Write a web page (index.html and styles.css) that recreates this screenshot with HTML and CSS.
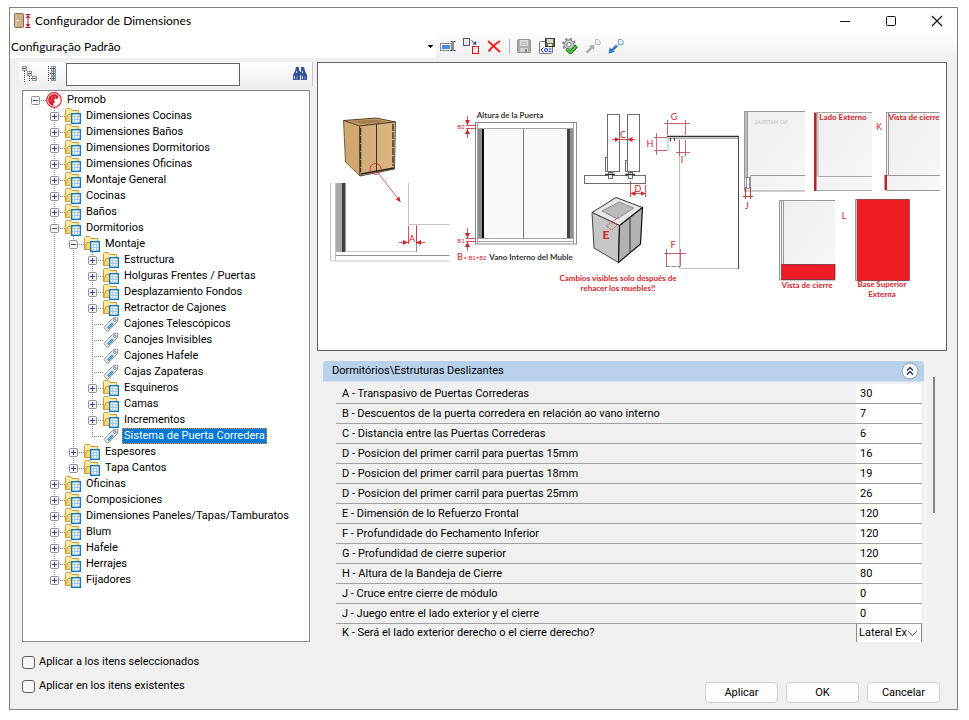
FILE: index.html
```html
<!DOCTYPE html>
<html lang="es">
	<head>
		<meta charset="UTF-8">
		<title>Configurador de Dimensiones</title>
		<link rel="stylesheet" href="styles.css">
	</head>
	<body>
		<!-- shared icons -->
		<svg class="sprite" width="0" height="0" aria-hidden="true">
			<symbol id="plus" viewBox="0 0 9 9">
				<rect x=".5" y=".5" width="8" height="8" rx="1" fill="#f6f6f6" stroke="#8f8f8f"/>
				<path d="M2 4.500h5M4.500 2v5" stroke="#2c4b9c"/>
			</symbol>
			<symbol id="minus" viewBox="0 0 9 9">
				<rect x=".5" y=".5" width="8" height="8" rx="1" fill="#f6f6f6" stroke="#8f8f8f"/>
				<path d="M2 4.500h5" stroke="#2c4b9c"/>
			</symbol>
			<symbol id="folder" viewBox="0 0 16 16">
				<path d="M.5 13.500V1.500L1.500 .5H5.500L7 2.500H13.500V6" fill="#ffe9a8" stroke="#d69a35"/>
				<path d="M.5 13.500L3 6.500H15L13 13.500Z" fill="#fbd371" stroke="#d69a35"/>
				<rect x="6.700" y="5.700" width="8.600" height="9.600" fill="#fff" stroke="#0b79b8" stroke-width="1.400"/>
				<path d="M8 8.500h6M8 11.500h6M9.500 7.500v7M12.500 7.500v7" stroke="#a5c4e6"/>
			</symbol>
			<symbol id="tag" viewBox="0 0 16 16">
				<path d="M1 11.500L9.500 2.500L13.500 1L15 2L14 6L5.500 14.800L4 15Z" fill="#fafafa" stroke="#8a8a8a"/>
				<path d="M4 11.500L9 6.200L10.800 8L5.700 13.200Z" fill="#1c86c6"/>
				<path d="M5 12.200L9.800 7.200" stroke="#8ccdf0" stroke-width=".8"/>
				<circle cx="11.800" cy="4.200" r="1.300" fill="#fff" stroke="#777"/>
			</symbol>
			<symbol id="promob" viewBox="0 0 16 16">
				<circle cx="8" cy="8" r="7.300" fill="#fff" stroke="#d9202c" stroke-width="1.200"/>
				<path d="M7.500 14C3 13 1.500 9.500 2.500 6C3.500 3 6 2 9 2L12 3.500L12.500 6L10.500 7L9 6.500L8 8L9 10.500L7.500 11Z" fill="#d9202c"/>
				<path d="M5 6L7 5M8 4L10 5M4 9L6 8" stroke="#f39aa0" stroke-width=".7"/>
			</symbol>
		</svg>

		<div class="window">
			<header class="titlebar">
				<svg class="app-icon" viewBox="0 0 17 16">
					<rect x=".5" y=".5" width="9" height="14" rx="1" fill="#cdb08a" stroke="#8b6a43"/>
					<path d="M2 2v11" stroke="#e9d6b8"/>
					<path d="M3 7.500h1.500" stroke="#fff"/>
					<path d="M11.500 1.500h5M11.500 14.500h5M14 2v12" stroke="#cf1b2b"/>
					<path d="M11.800 5L14 2L16.200 5ZM11.800 11L14 14L16.200 11Z" fill="#cf1b2b"/>
				</svg>
				<h1>Configurador de Dimensiones</h1>
				<div class="controls">
					<button type="button" aria-label="Minimizar"><svg viewBox="0 0 12 12"><path d="M1 6.500h10" stroke="#111"/></svg></button>
					<button type="button" aria-label="Maximizar"><svg viewBox="0 0 12 12"><rect x="1.500" y="1.500" width="9" height="9" rx="1" fill="none" stroke="#111"/></svg></button>
					<button type="button" aria-label="Cerrar"><svg viewBox="0 0 12 12"><path d="M1 1l10 10M11 1L1 11" stroke="#111" stroke-width="1.200"/></svg></button>
				</div>
			</header>

			<div class="toolbar">
				<select class="profile" aria-label="Perfil">
					<option>Configuração Padrão</option>
				</select>
				<button type="button" aria-label="Renombrar"><svg viewBox="0 0 16 16">
					<rect x=".5" y="5.500" width="11" height="7" fill="#fff" stroke="#7b8794"/>
					<rect x="2" y="7" width="8" height="4" fill="#4f86e0"/>
					<path d="M10.500 3.500h2M13.500 3.500h2M10.500 12.500h2M13.500 12.500h2M13 4v8" stroke="#222"/>
				</svg></button>
				<button type="button" aria-label="Duplicar"><svg viewBox="0 0 16 16">
					<rect x=".5" y=".5" width="6" height="7" fill="#e9e9ee" stroke="#6d5058"/>
					<rect x="9.500" y="8.500" width="6" height="7" fill="#fde9e9" stroke="#d31616"/>
					<path d="M8.500 2.500l3 2.500" stroke="#1a2c78"/><path d="M13 3v3.500h-3.500z" fill="#1a2c78"/>
				</svg></button>
				<button type="button" aria-label="Eliminar"><svg viewBox="0 0 16 16">
					<path d="M2 3L14 14M14 3Q7 7 2.500 13.500" fill="none" stroke="#f32222" stroke-width="2"/>
				</svg></button>
				<span class="sep"></span>
				<button type="button" aria-label="Guardar"><svg viewBox="0 0 16 16">
					<rect x="1.500" y="1.500" width="13" height="13" rx="1" fill="#ababab" stroke="#8e8e8e"/>
					<rect x="4" y="2" width="8" height="6" fill="#dcdcdc"/>
					<path d="M5 4.500h6M5 6.500h6" stroke="#b5b5b5"/>
					<rect x="4" y="10" width="8" height="4" fill="#d4d4d4"/><rect x="9" y="11" width="2" height="3" fill="#888"/>
				</svg></button>
				<button type="button" aria-label="Guardar como"><svg viewBox="0 0 16 16">
					<rect x=".5" y="3.500" width="13" height="12" rx="1" fill="#f7f7f7" stroke="#777"/>
					<rect x="6.500" y=".5" width="9" height="8" fill="#6e6a50" stroke="#3e3c30"/>
					<rect x="8" y="1" width="6" height="4" fill="#dadada"/><rect x="9" y="6" width="4" height="2" fill="#eee"/>
					<path d="M4.500 9.500L2 12L4.500 14.500M9.500 11h3M9.500 13.500h3" fill="none" stroke="#1b35ff"/>
					<circle cx="7" cy="12" r="1.500" fill="none" stroke="#1b35ff"/>
				</svg></button>
				<button type="button" aria-label="Aplicar cambios"><svg viewBox="0 0 16 16">
					<circle cx="7" cy="6.500" r="4.800" fill="#c4c4c4" stroke="#8a8a8a"/>
					<circle cx="7" cy="6.500" r="6" fill="none" stroke="#8a8a8a" stroke-width="1.800" stroke-dasharray="2.400 2.300"/>
					<circle cx="7" cy="6.500" r="2" fill="#f5f5f5" stroke="#8a8a8a"/>
					<path d="M4.500 11L8.500 14.500L14.800 8" fill="none" stroke="#1d7a1d" stroke-width="3.400"/>
					<path d="M4.800 11.200L8.500 14.200L14.500 8.200" fill="none" stroke="#58d047" stroke-width="1.600"/>
				</svg></button>
				<button type="button" aria-label="Exportar"><svg viewBox="0 0 16 16">
					<path d="M.5 13.500L5.500 9L4 7.500L9.500 7L9 12L7.500 10.500L2.500 15.500Z" fill="#aeaeae"/>
					<path d="M10.500 1.500h3l1.500 1.500v3.500h-4.500z" fill="#efefef" stroke="#bfbfbf"/>
				</svg></button>
				<button type="button" aria-label="Importar"><svg viewBox="0 0 16 16">
					<path d="M8 6.500L10 8.500L5.500 12.500L7 14L.5 15.500L1.500 9.500L3.500 11Z" fill="#3b7bcb"/>
					<path d="M10.500 1.500h3l1.500 1.500v3.500h-4.500z" fill="#eef5ff" stroke="#6fa5e6"/>
				</svg></button>
			</div>

			<main class="main">
				<section class="side">
					<div class="search">
						<button type="button" aria-label="Contraer todo"><svg viewBox="0 0 16 16">
							<path d="M2.500 5v11M5 6.500h2M7.500 10v6M9 12.500h2" fill="none" stroke="#444" stroke-dasharray="1 1"/>
							<rect x=".5" y=".5" width="4" height="4" fill="#fff" stroke="#8297a8"/><rect x="5.500" y="5.500" width="4" height="4" fill="#fff" stroke="#8297a8"/><rect x="10.500" y="10.500" width="4" height="4" fill="#fff" stroke="#8297a8"/>
							<path d="M1 2.500h3M6 7.500h3M11 12.500h3" stroke="#555"/>
						</svg></button>
						<button type="button" aria-label="Expandir todo"><svg viewBox="0 0 16 16">
							<path d="M4.500 0v16M6 2.500h2M6 7.500h2M6 12.500h2" stroke="#444" stroke-dasharray="1 1"/>
							<rect x="7.500" y=".5" width="4" height="4" fill="#fff" stroke="#8297a8"/><rect x="7.500" y="5.500" width="4" height="4" fill="#fff" stroke="#8297a8"/><rect x="7.500" y="10.500" width="4" height="4" fill="#fff" stroke="#8297a8"/>
							<path d="M8 2.500h3M8 7.500h3M8 12.500h3M9.500 1v3M9.500 6v3M9.500 11v3" stroke="#555"/>
						</svg></button>
						<input type="text" aria-label="Buscar">
						<button type="button" class="find" aria-label="Buscar siguiente"><svg viewBox="0 0 16 16">
							<path d="M4 1h3v3l1 1v9H1V9l2-4zM9 1h3l1 4 2 4v5H9V5z" fill="#34539a"/>
							<path d="M7 6h2v3H7z" fill="#34539a"/>
							<path d="M2.500 10v3M10.500 10v3M4.500 5v2M10.500 5v2" stroke="#cddbf5"/>
							<path d="M5 10.500v3M13 10.500v3" stroke="#7f9bd4"/>
						</svg></button>
					</div>

					<nav class="tree">
						<ul>
							<li>
								<div class="row"><button type="button" aria-label="Contraer"><svg><use href="#minus"/></svg></button><svg class="icon"><use href="#promob"/></svg><span>Promob</span></div>
								<ul>
									<li><div class="row"><button type="button" aria-label="Expandir"><svg><use href="#plus"/></svg></button><svg class="icon"><use href="#folder"/></svg><span>Dimensiones Cocinas</span></div></li>
									<li><div class="row"><button type="button" aria-label="Expandir"><svg><use href="#plus"/></svg></button><svg class="icon"><use href="#folder"/></svg><span>Dimensiones Baños</span></div></li>
									<li><div class="row"><button type="button" aria-label="Expandir"><svg><use href="#plus"/></svg></button><svg class="icon"><use href="#folder"/></svg><span>Dimensiones Dormitorios</span></div></li>
									<li><div class="row"><button type="button" aria-label="Expandir"><svg><use href="#plus"/></svg></button><svg class="icon"><use href="#folder"/></svg><span>Dimensiones Oficinas</span></div></li>
									<li><div class="row"><button type="button" aria-label="Expandir"><svg><use href="#plus"/></svg></button><svg class="icon"><use href="#folder"/></svg><span>Montaje General</span></div></li>
									<li><div class="row"><button type="button" aria-label="Expandir"><svg><use href="#plus"/></svg></button><svg class="icon"><use href="#folder"/></svg><span>Cocinas</span></div></li>
									<li><div class="row"><button type="button" aria-label="Expandir"><svg><use href="#plus"/></svg></button><svg class="icon"><use href="#folder"/></svg><span>Baños</span></div></li>
									<li>
										<div class="row"><button type="button" aria-label="Contraer"><svg><use href="#minus"/></svg></button><svg class="icon"><use href="#folder"/></svg><span>Dormitorios</span></div>
										<ul>
											<li>
												<div class="row"><button type="button" aria-label="Contraer"><svg><use href="#minus"/></svg></button><svg class="icon"><use href="#folder"/></svg><span>Montaje</span></div>
												<ul>
													<li><div class="row"><button type="button" aria-label="Expandir"><svg><use href="#plus"/></svg></button><svg class="icon"><use href="#folder"/></svg><span>Estructura</span></div></li>
													<li><div class="row"><button type="button" aria-label="Expandir"><svg><use href="#plus"/></svg></button><svg class="icon"><use href="#folder"/></svg><span>Holguras Frentes / Puertas</span></div></li>
													<li><div class="row"><button type="button" aria-label="Expandir"><svg><use href="#plus"/></svg></button><svg class="icon"><use href="#folder"/></svg><span>Desplazamiento Fondos</span></div></li>
													<li><div class="row"><button type="button" aria-label="Expandir"><svg><use href="#plus"/></svg></button><svg class="icon"><use href="#folder"/></svg><span>Retractor de Cajones</span></div></li>
													<li><div class="row leaf"><svg class="icon"><use href="#tag"/></svg><span>Cajones Telescópicos</span></div></li>
													<li><div class="row leaf"><svg class="icon"><use href="#tag"/></svg><span>Canojes Invisibles</span></div></li>
													<li><div class="row leaf"><svg class="icon"><use href="#tag"/></svg><span>Cajones Hafele</span></div></li>
													<li><div class="row leaf"><svg class="icon"><use href="#tag"/></svg><span>Cajas Zapateras</span></div></li>
													<li><div class="row"><button type="button" aria-label="Expandir"><svg><use href="#plus"/></svg></button><svg class="icon"><use href="#folder"/></svg><span>Esquineros</span></div></li>
													<li><div class="row"><button type="button" aria-label="Expandir"><svg><use href="#plus"/></svg></button><svg class="icon"><use href="#folder"/></svg><span>Camas</span></div></li>
													<li><div class="row"><button type="button" aria-label="Expandir"><svg><use href="#plus"/></svg></button><svg class="icon"><use href="#folder"/></svg><span>Incrementos</span></div></li>
													<li><div class="row leaf"><svg class="icon"><use href="#tag"/></svg><span class="selected">Sistema de Puerta Corredera</span></div></li>
												</ul>
											</li>
											<li><div class="row"><button type="button" aria-label="Expandir"><svg><use href="#plus"/></svg></button><svg class="icon"><use href="#folder"/></svg><span>Espesores</span></div></li>
											<li><div class="row"><button type="button" aria-label="Expandir"><svg><use href="#plus"/></svg></button><svg class="icon"><use href="#folder"/></svg><span>Tapa Cantos</span></div></li>
										</ul>
									</li>
									<li><div class="row"><button type="button" aria-label="Expandir"><svg><use href="#plus"/></svg></button><svg class="icon"><use href="#folder"/></svg><span>Oficinas</span></div></li>
									<li><div class="row"><button type="button" aria-label="Expandir"><svg><use href="#plus"/></svg></button><svg class="icon"><use href="#folder"/></svg><span>Composiciones</span></div></li>
									<li><div class="row"><button type="button" aria-label="Expandir"><svg><use href="#plus"/></svg></button><svg class="icon"><use href="#folder"/></svg><span>Dimensiones Paneles/Tapas/Tamburatos</span></div></li>
									<li><div class="row"><button type="button" aria-label="Expandir"><svg><use href="#plus"/></svg></button><svg class="icon"><use href="#folder"/></svg><span>Blum</span></div></li>
									<li><div class="row"><button type="button" aria-label="Expandir"><svg><use href="#plus"/></svg></button><svg class="icon"><use href="#folder"/></svg><span>Hafele</span></div></li>
									<li><div class="row"><button type="button" aria-label="Expandir"><svg><use href="#plus"/></svg></button><svg class="icon"><use href="#folder"/></svg><span>Herrajes</span></div></li>
									<li><div class="row"><button type="button" aria-label="Expandir"><svg><use href="#plus"/></svg></button><svg class="icon"><use href="#folder"/></svg><span>Fijadores</span></div></li>
								</ul>
							</li>
						</ul>
					</nav>
				</section>

				<section class="detail">
					<div class="preview">
						<svg viewBox="318 63 628 287" role="img" aria-label="Estruturas Deslizantes">
							<defs>
								<linearGradient id="wood" x1="0" x2="1"><stop offset="0" stop-color="#d0ab75"/><stop offset="1" stop-color="#dcb880"/></linearGradient>
								<linearGradient id="panel" x1="0" y1="0" x2="1" y2="1"><stop offset="0" stop-color="#eeeeee"/><stop offset="1" stop-color="#f7f7f7"/></linearGradient>
								<marker id="arrow" viewBox="0 0 6 6" refX="6" refY="3" markerWidth="5" markerHeight="5" markerUnits="userSpaceOnUse" orient="auto-start-reverse"><path d="M0 0L6 3L0 6Z" fill="#d2232a"/></marker>
							</defs>

							<!-- cabinet and detail A -->
							<path d="M343.500 120.500L376 118L395.500 122L359.500 126Z" fill="#c9a069" stroke="#57432b"/>
							<path d="M350 121L375 119.500L387 122L362 124Z" fill="#a37e4e"/>
							<path d="M343.500 120.500L359.500 126L360 176L345.500 162Z" fill="#cfa76f" stroke="#57432b" stroke-width=".8"/>
							<path d="M359.500 126L395.500 122L394.500 169L360 176Z" fill="url(#wood)" stroke="#3b3129" stroke-width=".8"/>
							<path d="M376.500 124v48" stroke="#3b2f22"/>
							<path d="M360.500 128v44M393 124v42" stroke="#333" stroke-width="1.400" stroke-dasharray="7 1"/>
							<path d="M361 174L394 168" stroke="#222" stroke-width="1.400"/>
							<circle cx="375.500" cy="169" r="5.500" fill="none" stroke="#d2232a" stroke-width=".8"/>
							<path d="M379 174L400.500 202" stroke="#d2232a" stroke-width=".7" marker-end="url(#arrow)"/>
							<rect x="335.500" y="183" width="7" height="69" fill="#aaa"/>
							<rect x="342" y="183" width="3.500" height="69" fill="#3e3e3e"/>
							<path d="M330.500 183v78M335.500 183v78M345 251.500h72M330.500 261h119M408.500 183v41.500h41" fill="none" stroke="#c4c4c4"/>
							<path d="M335.500 255.500h114M416.500 225v27" stroke="#8f8f8f"/>
							<path d="M408.500 226v18M416.500 226v18" stroke="#d2232a" stroke-width=".8"/>
							<path d="M399 242.500h9" stroke="#d2232a" stroke-width=".8" marker-end="url(#arrow)"/>
							<path d="M425 242.500h-9" stroke="#d2232a" stroke-width=".8" marker-end="url(#arrow)"/>
							<text class="dim" x="412" y="242">A</text>

							<!-- front view -->
							<rect x="475.500" y="122.500" width="101" height="121.500" fill="#fff" stroke="#8c8c8c"/>
							<path d="M477.500 123v121M573.500 123v121M478 128.500h95M478 238.500h95M478 241.500h95" stroke="#8c8c8c" stroke-width=".8"/>
							<rect x="484" y="129" width="83" height="109" fill="#faf8f8"/>
							<rect x="478" y="129" width="4" height="109" fill="#8b8b8b"/>
							<rect x="482" y="129" width="2" height="109" fill="#0d0d0d"/>
							<rect x="567" y="129" width="3" height="109" fill="#444"/>
							<rect x="570" y="129" width="3" height="109" fill="#909090"/>
							<path d="M523.500 129v109" stroke="#777"/>
							<g stroke="#d2232a" stroke-width=".8">
								<path d="M466 125.500h10M466 128.500h10M466 238.500h10M466 241.500h10"/>
								<path d="M467.500 116v9" marker-end="url(#arrow)"/>
								<path d="M467.500 138v-9" marker-end="url(#arrow)"/>
								<path d="M467.500 228v10" marker-end="url(#arrow)"/>
								<path d="M467.500 251v-9" marker-end="url(#arrow)"/>
							</g>
							<text class="tiny" x="461" y="129">B2</text>
							<text class="tiny" x="461" y="243">B1</text>
							<text class="dim" x="460" y="260">B</text>
							<text class="tiny" x="475" y="260">= B1+B2</text>
							<text class="note dark" x="510" y="118">Altura de la Puerta</text>
							<text class="note dark" x="531" y="260">Vano Interno del Muble</text>

							<!-- door gap and first rail -->
							<g fill="#fff" stroke="#6b6b6b">
								<rect x="607.500" y="114.500" width="12" height="57"/>
								<rect x="627.500" y="114.500" width="12" height="57"/>
								<rect x="584.500" y="175.500" width="61" height="8"/>
								<rect x="605.500" y="157.500" width="2" height="14"/>
								<rect x="625.500" y="160.500" width="2" height="11"/>
								<rect x="608.500" y="172.500" width="4" height="6"/>
								<rect x="628.500" y="172.500" width="4" height="6"/>
							</g>
							<path d="M605 174.500h10M625 174.500h10" stroke="#333" stroke-width="1.400"/>
							<g stroke="#d2232a" stroke-width=".8">
								<path d="M612 139.500h7.500" marker-end="url(#arrow)"/>
								<path d="M635 139.500h-7.500" marker-end="url(#arrow)"/>
								<path d="M619.500 139.500h8M630.500 181v16M645.500 185v12"/>
								<path d="M630.500 193.500h15" marker-start="url(#arrow)" marker-end="url(#arrow)"/>
							</g>
							<text class="dim" x="623" y="138">C</text>
							<text class="dim" x="638" y="192">D</text>

							<!-- open box -->
							<path d="M592 212.500L616 197.500L642.500 207.500L619.500 225.500Z" fill="#e8e8e8" stroke="#333"/>
							<path d="M602 211L619 202L634 208L617 219Z" fill="#b9b9b9" stroke="#666" stroke-width=".6"/>
							<path d="M592 212.500L619.500 225.500L618.500 262.500L594 248Z" fill="#c6c6c6" stroke="#444"/>
							<path d="M619.500 225.500L642.500 207.500L640.500 244L618.500 262.500Z" fill="#b2b2b2" stroke="#111" stroke-width="1.200"/>
							<path d="M630 218v34.500" stroke="#333"/>
							<path d="M606 226L612 222L617 225L612 230ZM612 222L619 217" fill="none" stroke="#d2232a" stroke-width=".7" stroke-dasharray="2 1"/>
							<text class="big" x="606" y="239">E</text>
							<text class="note" x="618" y="281">Cambios visibles solo después de</text>
							<text class="note" x="618" y="291">rehacer los muebles!!</text>

							<!-- closing profile G H I F -->
							<path d="M667 136.500h72" stroke="#333" stroke-width="1.600"/>
							<path d="M667 138.500h71" stroke="#aaa"/>
							<path d="M738.500 137v132" stroke="#4a4a4a"/>
							<path d="M679.500 138v131M668 137v14M680 268.500h58" stroke="#c4c4c4" stroke-width="1.200"/>
							<path d="M670.500 138v3M674.500 138v3" stroke="#333"/>
							<path d="M665.500 266.500h15" stroke="#888" stroke-dasharray="5 1"/>
							<path d="M664 123.500h26M667.500 120v15M685.500 120v15M656.500 133v22M654 137.500h13M654 150.500h13M679.500 140v16M685.500 140v16M676 152.500h14M664 253.500h22M666.500 249v17M680.500 249v17" stroke="#c04047" stroke-width=".8"/>
							<text class="dim" x="674" y="120">G</text>
							<text class="dim" x="650" y="147">H</text>
							<text class="dim" x="682" y="163">I</text>
							<text class="dim" x="673" y="248">F</text>

							<!-- J -->
							<rect x="744" y="111" width="61" height="80" fill="url(#panel)"/>
							<rect x="744.500" y="111.500" width="3" height="66" fill="#bbb" stroke="#8c8c8c" stroke-width=".8"/>
							<path d="M744 111.500h61M744 191h61M750.500 190v-14.500H805M744.500 177v14" fill="none" stroke="#999"/>
							<rect x="746.500" y="177.500" width="3" height="11" fill="#fff" stroke="#777" stroke-width=".8"/>
							<text class="faint" transform="translate(771 124) scale(-1 1)">NO MATERIAL</text>
							<path d="M743 196.500h10M745.500 187v12M750.500 187v12" stroke="#c04047"/>
							<text class="dim" x="747" y="209">J</text>

							<!-- K -->
							<rect x="814" y="112" width="58" height="78" fill="url(#panel)"/>
							<path d="M814 112.500h58M819 176.500h53M814 190.500h58" stroke="#aaa"/>
							<rect x="816.500" y="113" width="2" height="64" fill="#bbb"/>
							<rect x="814" y="113" width="2.500" height="78" fill="#b3282e"/>
							<text class="note" x="843" y="120">Lado Externo</text>
							<text class="dim" x="879" y="130">K</text>
							<rect x="887" y="112" width="53" height="78" fill="url(#panel)"/>
							<path d="M886.500 112.500h53M886 175.500h54M886 190.500h54M886.500 112v63M888.500 112v63" fill="none" stroke="#999"/>
							<rect x="884.500" y="175" width="2.500" height="15" fill="#b3282e"/>
							<text class="note" x="914" y="120">Vista de cierre</text>

							<!-- L -->
							<rect x="779.500" y="200.500" width="55.500" height="79.500" fill="url(#panel)"/>
							<path d="M835 200.500H779.500V280H835M781.500 200v64M783.500 200v64" fill="none" stroke="#999"/>
							<rect x="781.500" y="264.500" width="53.500" height="15" fill="#ee1c25" stroke="#6d2225" stroke-width=".7"/>
							<text class="note" x="807" y="288">Vista de cierre</text>
							<text class="dim" x="844" y="219">L</text>
							<path d="M909 199.500H855.500V280.500H909" fill="#fff" stroke="#999"/>
							<rect x="857" y="199.500" width="52.500" height="81" fill="#ee1c25" stroke="#7d4043" stroke-width=".7"/>
							<text class="note" x="882" y="287">Base Superior</text>
							<text class="note" x="882" y="297">Externa</text>
						</svg>
					</div>

					<div class="properties">
						<div class="group">
							<div class="group-head">
								<h2>Dormitórios\Estruturas Deslizantes</h2>
								<button type="button" aria-label="Contraer grupo"><svg viewBox="0 0 18 18">
									<circle cx="9" cy="9" r="8" fill="#fff" stroke="#8d9aab"/>
									<path d="M6 8.500L9 5.500L12 8.500M6 12.500L9 9.500L12 12.500" fill="none" stroke="#1c2c66" stroke-width="1.400"/>
								</svg></button>
							</div>
							<table>
								<tbody>
									<tr><th><label for="p1">A - Transpasivo de Puertas Correderas</label></th><td><input id="p1" type="text" value="30"></td></tr>
									<tr><th><label for="p2">B - Descuentos de la puerta corredera en relación ao vano interno</label></th><td><input id="p2" type="text" value="7"></td></tr>
									<tr><th><label for="p3">C - Distancia entre las Puertas Correderas</label></th><td><input id="p3" type="text" value="6"></td></tr>
									<tr><th><label for="p4">D - Posicion del primer carril para puertas 15mm</label></th><td><input id="p4" type="text" value="16"></td></tr>
									<tr><th><label for="p5">D - Posicion del primer carril para puertas 18mm</label></th><td><input id="p5" type="text" value="19"></td></tr>
									<tr><th><label for="p6">D - Posicion del primer carril para puertas 25mm</label></th><td><input id="p6" type="text" value="26"></td></tr>
									<tr><th><label for="p7">E - Dimensión de lo Refuerzo Frontal</label></th><td><input id="p7" type="text" value="120"></td></tr>
									<tr><th><label for="p8">F - Profundidade do Fechamento Inferior</label></th><td><input id="p8" type="text" value="120"></td></tr>
									<tr><th><label for="p9">G - Profundidad de cierre superior</label></th><td><input id="p9" type="text" value="120"></td></tr>
									<tr><th><label for="p10">H - Altura de la Bandeja de Cierre</label></th><td><input id="p10" type="text" value="80"></td></tr>
									<tr><th><label for="p11">J - Cruce entre cierre de módulo</label></th><td><input id="p11" type="text" value="0"></td></tr>
									<tr><th><label for="p12">J - Juego entre el lado exterior y el cierre</label></th><td><input id="p12" type="text" value="0"></td></tr>
									<tr><th><label for="p13">K - Será el lado exterior derecho o el cierre derecho?</label></th><td><select id="p13"><option>Lateral Ex</option></select></td></tr>
								</tbody>
							</table>
						</div>
						<div class="thumb"></div>
					</div>
				</section>
			</main>

			<footer class="footer">
				<div class="checks">
					<label><input type="checkbox">Aplicar a los itens seleccionados</label>
					<label><input type="checkbox">Aplicar en los itens existentes</label>
				</div>
				<div class="actions">
					<button type="button">Aplicar</button>
					<button type="button">OK</button>
					<button type="button">Cancelar</button>
				</div>
			</footer>
		</div>
	</body>
</html>
```
FILE: styles.css
```css
*{
	box-sizing: border-box;
}
body{
	margin: 0;
	min-height: 100vh;
	padding: 7px 11px 10px 9px;
	display: flex;
	background: #fff;
	color: #000;
	font: 11px/16px Roboto, "Liberation Sans", Arial, sans-serif;
}
ul{
	margin: 0;
	padding: 0;
	list-style: none;
}
h1,h2{
	margin: 0;
	font-weight: normal;
}
button,input,select{
	font: inherit;
	color: inherit;
	margin: 0;
}
button{
	padding: 0;
	border: 0;
	background: none;
}
svg{
	display: block;
}
.sprite{
	position: absolute;
}
.window{
	flex: 1;
	min-width: 0;
	display: flex;
	flex-direction: column;
	border: 1px solid #808080;
	background: #f0f0f0;
}

/* title bar */
.titlebar{
	display: flex;
	align-items: center;
	height: 26px;
	padding-left: 4px;
	background: #fff;
}
.titlebar h1{
	flex: 1;
	margin: 0 0 0 4px;
	font: 12px/16px Lato, "Open Sans", sans-serif;
}
.app-icon{
	width: 17px;
	height: 16px;
}
.controls{
	display: flex;
	gap: 6px;
}
.controls button{
	width: 40px;
	height: 22px;
}
.controls svg{
	width: 12px;
	height: 12px;
	margin: 0 auto;
}

/* main toolbar */
.toolbar{
	display: flex;
	align-items: center;
	height: 24px;
	background: linear-gradient(#fdfdfd, #f0f0f0);
}
.toolbar button{
	width: 23px;
}
.toolbar button svg{
	width: 16px;
	height: 16px;
	margin: 0 auto;
}
.profile{
	appearance: none;
	width: 426px;
	height: 24px;
	padding: 2px 20px 0 1px;
	border: 0;
	border-radius: 0;
	font: 12px/16px Lato, "Open Sans", sans-serif;
	background:
		linear-gradient(#000, #000) right 3px top 11px / 5px 1px no-repeat,
		linear-gradient(#000, #000) right 4px top 12px / 3px 1px no-repeat,
		linear-gradient(#000, #000) right 5px top 13px / 1px 1px no-repeat,
		#fff;
}
.sep{
	width: 1px;
	height: 15px;
	margin: 0 2px 0 4px;
	background: #b5b5b5;
}

/* body */
.main{
	flex: 1;
	display: flex;
	gap: 4px;
	padding: 4px 10px 0 9px;
}
.side{
	width: 294px;
	display: flex;
	flex-direction: column;
	gap: 4px;
}
.search{
	display: flex;
	align-items: center;
	height: 24px;
	padding: 0 4px 0 3px;
	border-right: 1px solid #c8c8c8;
	background: linear-gradient(#fdfdfd, #f0f0f0);
}
.search button{
	width: 16px;
	margin-right: 6px;
}
.search svg{
	width: 16px;
	height: 16px;
}
.search input{
	width: 174px;
	height: 23px;
	border: 1px solid #646464;
	background: #fff;
}
.search .find{
	margin: 0 0 0 auto;
}
.tree{
	flex: 1;
	margin: 0 3px;
	padding: 1px 0 0 8px;
	border: 1px solid #828790;
	background: #fff;
}
.tree ul ul{
	margin-left: 19px;
}
/* dotted connectors */
.tree li li{
	background: repeating-linear-gradient(#808080 0 1px, transparent 1px 2px) 4px 0 / 1px 100% no-repeat;
}
.tree li li:last-child{
	background: none;
}
.row{
	display: flex;
	align-items: center;
	height: 16px;
	white-space: nowrap;
	background: repeating-linear-gradient(to right, #808080 0 1px, transparent 1px 2px) 4px 8px / 11px 1px no-repeat;
}
.tree li li:last-child > .row{
	background:
		repeating-linear-gradient(to right, #808080 0 1px, transparent 1px 2px) 4px 8px / 11px 1px no-repeat,
		repeating-linear-gradient(#808080 0 1px, transparent 1px 2px) 4px 0 / 1px 8px no-repeat;
}
.row button,
.row button svg{
	width: 9px;
	height: 9px;
}
.row .icon{
	width: 16px;
	height: 16px;
	margin: 0 3px 0 6px;
}
.row.leaf .icon{
	margin-left: 15px;
}
.row span{
	padding: 0 2px;
}
.row .selected{
	color: #fff;
	background: #0078d7;
	outline: 1px dotted #f28a28;
	outline-offset: -1px;
}

/* right side */
.detail{
	flex: 1;
	min-width: 0;
	display: flex;
	flex-direction: column;
	gap: 9px;
}
.preview{
	border: 1px solid #646464;
	background: #fff;
}
.preview svg{
	width: 100%;
	height: auto;
}
.preview text{
	text-anchor: middle;
	fill: #d2232a;
	font-family: Lato, "Open Sans", sans-serif;
}
.preview .note{
	font-size: 8px;
	font-weight: bold;
}
.preview .dark{
	fill: #333;
}
.preview .dim{
	font-size: 9px;
}
.preview .tiny{
	font-size: 6px;
}
.preview .big{
	font-size: 12px;
	font-weight: bold;
}
.preview .faint{
	font-size: 5px;
	fill: #c4c4c4;
}
.properties{
	flex: 1;
	display: flex;
	gap: 7px;
	padding: 0 12px 0 6px;
}
.group{
	flex: 1;
	min-width: 0;
	padding-top: 1px;
	border-right: 1px solid #fff;
}
.group-head{
	display: flex;
	align-items: center;
	justify-content: space-between;
	height: 21px;
	margin: 0 1px 2px 0;
	padding: 0 5px 0 9px;
	border-bottom: 1px solid #d3e2f3;
	border-radius: 4px 4px 0 0;
	background: #b9d1ea;
}
.group-head h2{
	font-size: 11px;
}
.group-head svg{
	width: 18px;
	height: 18px;
}
.group table{
	width: calc(100% - 16px);
	margin-left: 13px;
	border-spacing: 0;
	table-layout: fixed;
}
.group th,
.group td{
	height: 20px;
	padding: 0;
	border-bottom: 1px solid #a0a0a0;
	font-weight: normal;
	text-align: left;
}
.group th{
	padding-left: 6px;
}
.group td{
	width: 66px;
}
.group td input,
.group td select{
	display: block;
	width: 100%;
	height: 19px;
	padding: 0 4px;
	border: 0;
	border-radius: 0;
	background: #fff;
}
.group tr:last-child > *{
	height: 18px;
	border-bottom: 0;
}
.group td select{
	appearance: none;
	height: 18px;
	padding: 0 14px 0 2px;
	border: solid #8a8a8a;
	border-width: 0 1px;
	background:
		linear-gradient(45deg, transparent 46%, #555 46% 56%, transparent 56%) right 8px center / 5px 5px no-repeat,
		linear-gradient(-45deg, transparent 46%, #555 46% 56%, transparent 56%) right 4px center / 5px 5px no-repeat,
		#fff;
}
.thumb{
	width: 2px;
	height: 136px;
	margin-top: 17px;
	background: #858585;
}

/* footer */
.footer{
	display: flex;
	justify-content: space-between;
	align-items: flex-end;
	padding: 8px 17px 6px 12px;
}
.checks{
	padding-bottom: 5px;
}
.checks label{
	display: flex;
	align-items: center;
	gap: 4px;
	height: 24px;
}
.checks input{
	appearance: none;
	width: 13px;
	height: 13px;
	border: 1px solid #5f5f5f;
	border-radius: 3px;
	background: #f6f6f6;
}
.actions{
	display: flex;
	gap: 8px;
}
.actions button{
	width: 73px;
	height: 21px;
	border: 1px solid #cfcfcf;
	border-radius: 4px;
	background: #fdfdfd;
}
```
